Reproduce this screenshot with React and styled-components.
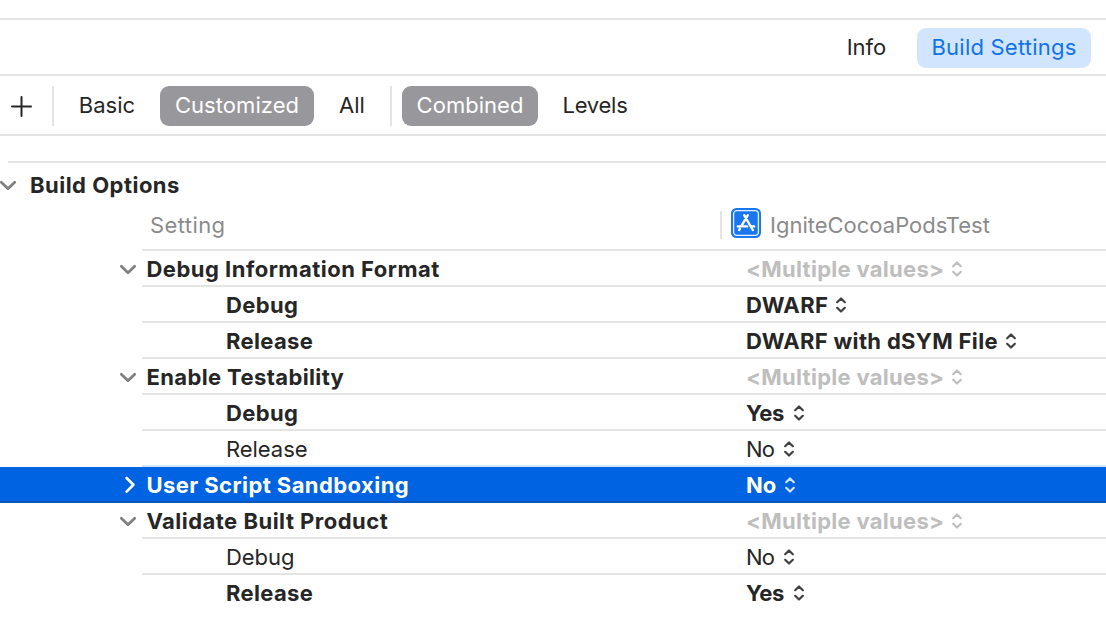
import React from 'react';
import styled, { createGlobalStyle } from 'styled-components';

const GlobalStyle = createGlobalStyle`
  *, *::before, *::after { box-sizing: border-box; }
  body {
    margin: 0;
    background: #fff;
    color: #262626;
    font: 400 22px/34px Inter, "Liberation Sans", sans-serif;
    overflow: hidden;
  }
`;

const line = '#e4e4e4';

const Page = styled.main`
  width: 1106px;
  height: 644px;
  display: flex;
  flex-direction: column;
  padding-top: 18px;
`;

const TabBar = styled.nav`
  height: 56px;
  flex: none;
  display: flex;
  justify-content: flex-end;
  align-items: center;
  gap: 16px;
  padding: 2px 15px 0 0;
  border-top: 2px solid ${line};
`;

const Toolbar = styled.div`
  height: 62px;
  flex: none;
  display: flex;
  align-items: center;
  padding: 2px 0 0 10px;
  border-top: 2px solid ${line};
  border-bottom: 2px solid ${line};
`;

const Pill = styled.button`
  flex: none;
  width: ${(p) => p.$width}px;
  height: 40px;
  padding: 0 0 1px;
  border: 0;
  border-radius: 9px;
  font: inherit;
  line-height: 39px;
  white-space: nowrap;
  letter-spacing: ${(p) => p.$track || 0}px;
  color: ${(p) => (p.$tone === 'gray' ? '#fff' : p.$tone === 'blue' ? '#1173e9' : '#262626')};
  background: ${(p) => (p.$tone === 'gray' ? '#98979c' : p.$tone === 'blue' ? '#d1e5ff' : 'transparent')};
`;

const Divider = styled.span`
  flex: none;
  width: 2px;
  height: ${(p) => p.$height}px;
  background: ${line};
`;

const Spacer = styled.span`
  width: 10px;
`;

const AddButton = styled.button`
  display: flex;
  flex: none;
  width: 42px;
  padding: 0;
  border: 0;
  background: none;
`;

const Section = styled.section`
  margin-top: 25px;
`;

const SectionTitle = styled.h2`
  display: flex;
  align-items: center;
  height: 46px;
  margin: 0 0 0 8px;
  padding: 0 0 1px;
  border-top: 2px solid ${line};
  font-size: 22px;
  font-weight: 700;
  letter-spacing: 0.48px;

  svg { flex: none; margin: 0 13px 0 -9px; }
`;

const HeaderRow = styled.div`
  display: flex;
  align-items: center;
  height: 44px;
  margin-left: 142px;
  padding: 0 0 6px 8px;
  border-bottom: 2px solid ${line};
  color: #8b8b8b;
`;

const HeaderLabel = styled.span`
  width: 570px;
  letter-spacing: 0.4px;
`;

const Target = styled.span`
  display: flex;
  align-items: center;

  svg { margin: -4px 9px 0 9px; }
`;

const Row = styled.div`
  display: flex;
  height: 36px;
  padding-left: ${(p) => (p.$selected ? 0 : 142)}px;
  background: ${(p) => (p.$selected ? '#0063e1' : 'transparent')};
  color: ${(p) => (p.$selected ? '#fff' : 'inherit')};
`;

const RowBody = styled.div`
  flex: 1;
  display: flex;
  padding-top: 1px;
  padding-left: ${(p) => (p.$selected ? 142 : 0)}px;
  border-bottom: 2px solid
    ${(p) => (p.$selected ? '#0b56bb' : p.$edge === 'none' ? 'transparent' : p.$edge === 'tint' ? '#d3e5f8' : line)};
`;

const Name = styled.span`
  display: flex;
  align-items: center;
  width: 604px;
  padding-left: ${(p) => (p.$child ? 84 : 0)}px;
  font-weight: ${(p) => (p.$bold ? 700 : 400)};
  letter-spacing: ${(p) => p.$track}px;
  white-space: nowrap;

  svg { flex: none; margin: 0 9.4px 0 -23px; }
`;

const Value = styled.span`
  display: flex;
  align-items: center;
  gap: ${(p) => p.$gap}px;
  font-weight: ${(p) => (p.$bold ? 700 : 400)};
  letter-spacing: ${(p) => p.$track}px;
  color: ${(p) => (p.$muted ? '#bebebe' : 'inherit')};
  white-space: nowrap;
`;

const Plus = () => (
  <svg width="23" height="23" viewBox="0 0 23 23" fill="none" stroke="#262626" strokeWidth="2" strokeLinecap="round">
    <path d="M11.5 2v19M2 11.5h19" />
  </svg>
);

const Disclosure = ({ open }) => (
  <svg width="18" height="18" viewBox="0 0 18 18" fill="none" stroke={open ? '#808080' : '#fff'} strokeWidth="2.7" strokeLinecap="round" strokeLinejoin="round">
    <path d={open ? 'M2.3 6.2L9 12.8l6.7-6.6' : 'M7.6 2l6.8 6.8-6.8 6.8'} />
  </svg>
);

const UpDown = ({ color }) => (
  <svg width="10" height="16" viewBox="0 0 10 16" fill="none" stroke={color} strokeWidth="2.2" strokeLinecap="round" strokeLinejoin="round">
    <path d="M1.2 5.2L5 1.5l3.8 3.7M1.2 10.8L5 14.5l3.8-3.7" />
  </svg>
);

const AppIcon = () => (
  <svg width="30" height="30" viewBox="0 0 30 30" fill="none">
    <rect width="30" height="30" rx="5.5" fill="#1a76ee" />
    <rect x="2.6" y="2.6" width="24.8" height="24.8" rx="3.4" stroke="#e4f1ff" strokeWidth="1.3" />
    <g stroke="#fff" strokeWidth="2.4" strokeLinecap="round">
      <path d="M13.2 7.2L21.8 22M16.8 7.2L10.3 18.2M8.9 20.7L8.2 22M6.8 18.4h9.4M20.4 18.4h2.8" />
    </g>
  </svg>
);

const rows = [
  { name: 'Debug Information Format', bold: true, track: 0.5, value: 'multiple' },
  { name: 'Debug', child: true, bold: true, track: 0.36, value: 'DWARF', vTrack: 0.38, gap: 8 },
  { name: 'Release', child: true, bold: true, track: 0.34, value: 'DWARF with dSYM File', vTrack: 0.33, gap: 8 },
  { name: 'Enable Testability', bold: true, track: 0.39, value: 'multiple' },
  { name: 'Debug', child: true, bold: true, track: 0.36, value: 'Yes', vTrack: -0.4, gap: 10.4 },
  { name: 'Release', child: true, track: -0.05, value: 'No', vTrack: -0.9, gap: 10, edge: 'tint' },
  { name: 'User Script Sandboxing', bold: true, track: 0.43, value: 'No', vTrack: -0.1, gap: 9, selected: true },
  { name: 'Validate Built Product', bold: true, track: 0.49, value: 'multiple' },
  { name: 'Debug', child: true, track: -0.05, value: 'No', vTrack: -0.9, gap: 10 },
  { name: 'Release', child: true, bold: true, track: 0.34, value: 'Yes', vTrack: -0.4, gap: 10.4, edge: 'none' },
];

function SettingRow({ row }) {
  const muted = row.value === 'multiple';
  return (
    <Row $selected={row.selected}>
      <RowBody $selected={row.selected} $edge={row.edge}>
        <Name $child={row.child} $bold={row.bold} $track={row.track}>
          {!row.child && <Disclosure open={!row.selected} />}
          <span>{row.name}</span>
        </Name>
        <Value $bold={row.bold} $muted={muted} $track={muted ? 0.29 : row.vTrack} $gap={muted ? 8 : row.gap}>
          <span>{muted ? '<Multiple values>' : row.value}</span>
          <UpDown color={row.selected ? '#d6e6fb' : muted ? '#bebebe' : '#404040'} />
        </Value>
      </RowBody>
    </Row>
  );
}

export default function App() {
  return (
    <Page>
      <GlobalStyle />
      <TabBar>
        <Pill $width={69}>Info</Pill>
        <Pill $tone="blue" $width={174} $track={0.22}>Build Settings</Pill>
      </TabBar>
      <Toolbar>
        <AddButton aria-label="Add"><Plus /></AddButton>
        <Divider $height={40} />
        <Pill $width={106}>Basic</Pill>
        <Pill $tone="gray" $width={154} $track={0.06}>Customized</Pill>
        <Pill $width={76}>All</Pill>
        <Divider $height={40} />
        <Spacer />
        <Pill $tone="gray" $width={136} $track={0.02}>Combined</Pill>
        <Pill $width={114} $track={-0.25}>Levels</Pill>
      </Toolbar>
      <Section>
        <SectionTitle><Disclosure open />Build Options</SectionTitle>
        <HeaderRow>
          <HeaderLabel>Setting</HeaderLabel>
          <Divider $height={28} />
          <Target><AppIcon />IgniteCocoaPodsTest</Target>
        </HeaderRow>
        {rows.map((row, i) => <SettingRow key={i} row={row} />)}
      </Section>
    </Page>
  );
}
